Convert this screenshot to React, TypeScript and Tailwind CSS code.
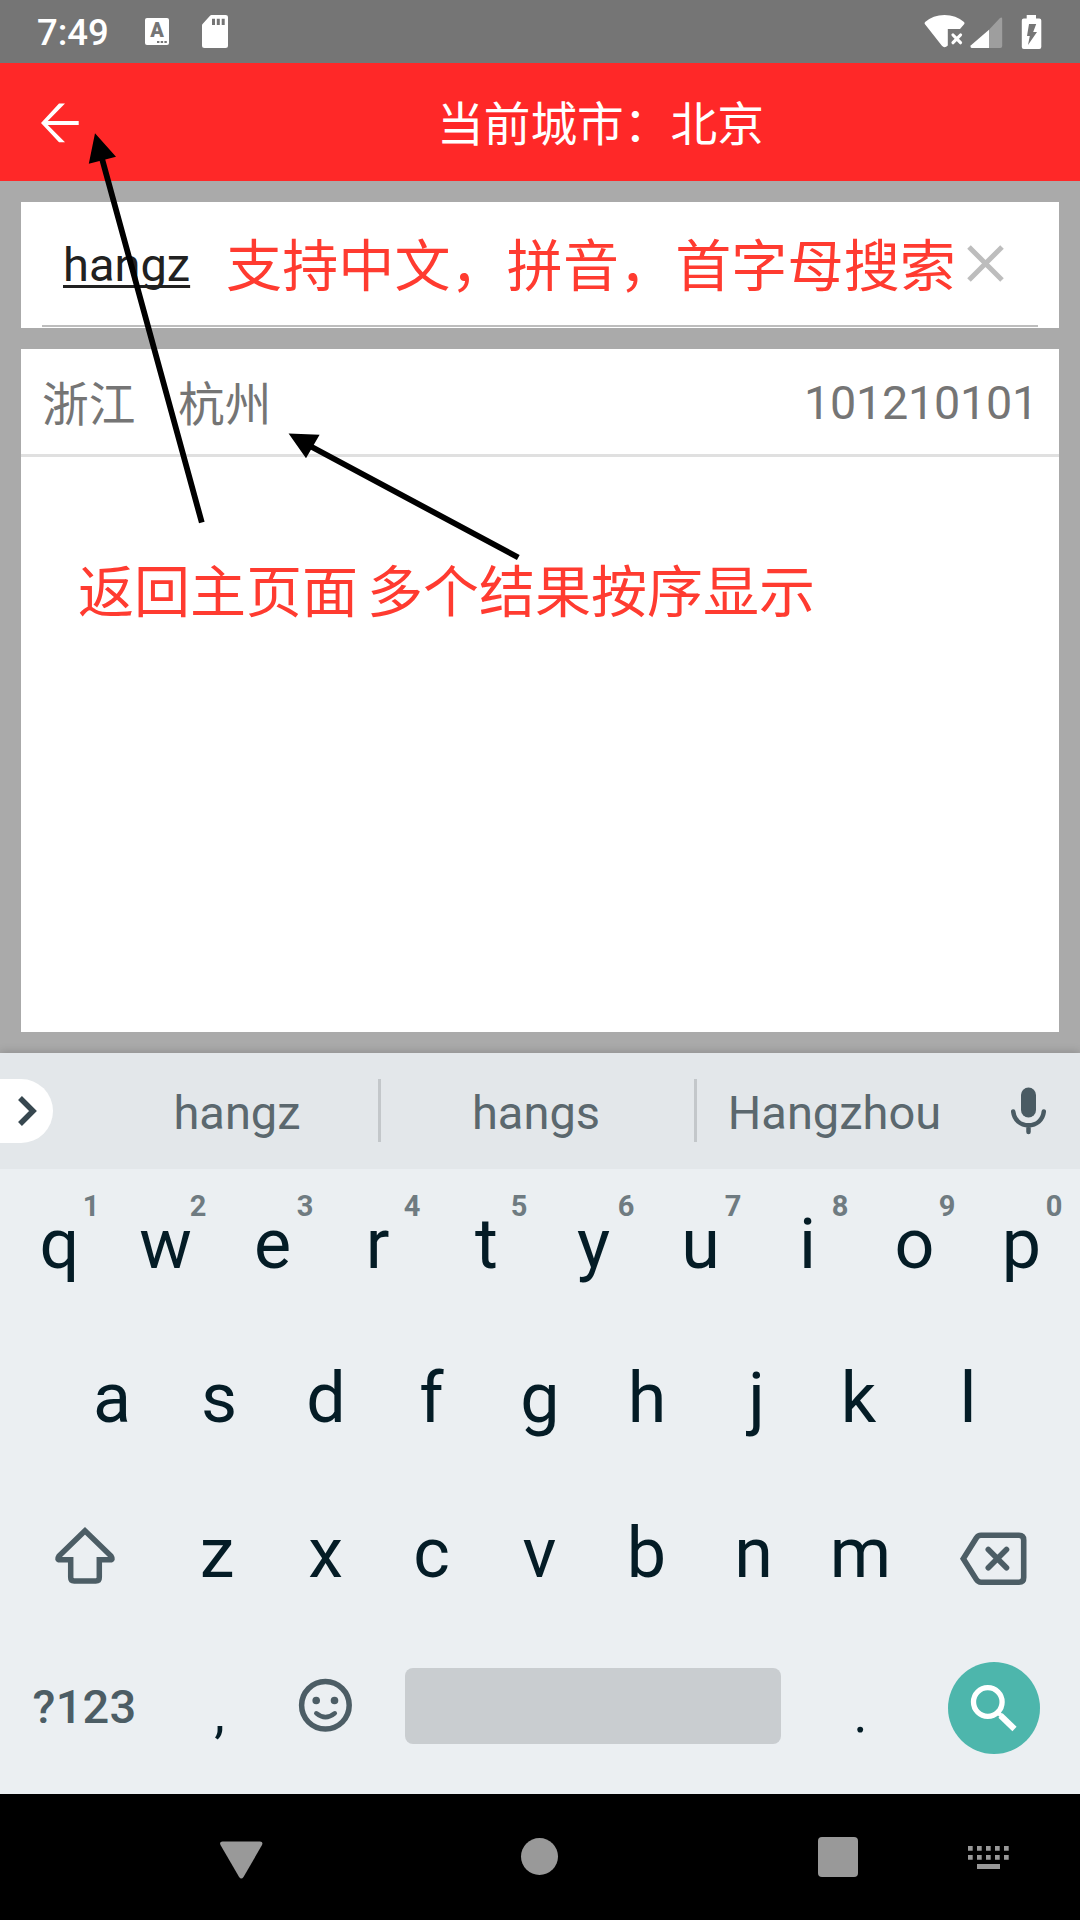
const sans = "font-['Roboto','Noto_Sans_CJK_SC',sans-serif]";
const cjk = "font-['Noto_Sans_CJK_SC',sans-serif]";

function StatusBar() {
  return (
    <div className="flex h-[63px] items-center bg-[#757575] text-white">
      <span className="ml-[37px] w-[108px] pt-[3px] text-[36.500px] leading-[42px] font-medium">7:49</span>
      <div className="relative flex h-[27px] w-6 justify-center rounded-[2px] bg-white">
        <span className="text-[20px] leading-[25px] font-black text-[#757575]">A</span>
        <svg className="absolute right-[2px] bottom-[2px]" width="10" height="2" fill="#757575">
          <path d="M0 0h2.4v2H0zM3.7 0h2.4v2H3.7zM7.4 0h2.4v2H7.4z" />
        </svg>
      </div>
      <svg className="ml-[33px]" width="26" height="33" viewBox="202 15 26 33" fill="white">
        <path
          fillRule="evenodd"
          d="M211.500 15H225.500a2.500 2.500 0 0 1 2.500 2.500V45.500a2.500 2.500 0 0 1-2.500 2.500H204.500a2.500 2.500 0 0 1-2.500-2.500V25.500q0-1 .8-1.800l7-7.700q.9-1 1.700-1ZM212 18.700V25h3v-6.300ZM216.800 18.700V25h3v-6.300ZM221.700 18.700V25h3v-6.300Z"
        />
      </svg>
      <svg className="mr-[38px] ml-auto" width="118" height="36" viewBox="924 13 118 36" fill="white">
        <path d="M924.800 23q-.6-1 .3-1.900Q933 14 944.500 14T964 21.100q.9.900.3 1.900L960 28H947.800V44.500Q944.500 48 941.700 44.500Z" />
        <path d="M953 34l7.500 7.700M960.500 34l-7.500 7.700" stroke="white" strokeWidth="3.200" strokeLinecap="round" />
        <path d="M989 28.800V47H972q-2.500-.6-1-2.800Z" />
        <path d="M989 28.800L1000 17q2-1.500 2.200.8V45q0 2-2 2H989Z" opacity=".3" />
        <path
          fillRule="evenodd"
          d="M1026.700 14h9.300v3.500h3.300q2 0 2 2V46q0 2-2 2h-15.500q-2 0-2-2V19.500q0-2 2-2h2.900ZM1029 23l-2 12h2.800l-1.800 9 9-13h-3.800l3-8Z"
        />
      </svg>
    </div>
  );
}

function Header() {
  return (
    <header className="flex h-[118px] items-center bg-[#ff2828] text-white">
      <svg className="mt-[2px] ml-[41px]" width="38" height="40" viewBox="41 103 38 40" fill="white">
        <path d="M59 103.500h6L47.800 120.900H78.700v4H47.800L65 142.300h-6L41 123Z" />
      </svg>
      <h1 className={`${cjk} mb-[2px] ml-[358px] text-[46.700px] leading-[60px]`}>当前城市：北京</h1>
    </header>
  );
}

function SearchBox() {
  return (
    <div className="flex h-[126px] flex-col bg-white px-[21px]">
      <div className="flex h-[125px] items-center border-b-2 border-[#bdbdbd]">
        <span className="mt-[2px] ml-[21px] text-[47px] leading-[60px] text-[#212121] underline decoration-[2.5px] underline-offset-[4px] [text-decoration-skip-ink:none]">
          hangz
        </span>
        <svg className="mr-[34px] ml-auto" width="37" height="37" viewBox="0 0 37 37" stroke="#bdbdbd" strokeWidth="5">
          <path d="M2 2l33 33M35 2L2 35" />
        </svg>
      </div>
    </div>
  );
}

function Results() {
  return (
    <div className="h-[683px] bg-white">
      <div className="flex h-[108px] items-center border-b-[3px] border-[#e0e0e0] px-[21px] text-[46.700px] leading-[60px] text-[#757575]">
        <span className={`${cjk} mb-[2px] w-[136px]`}>浙江</span>
        <span className={`${cjk} mb-[2px]`}>杭州</span>
        <span className="mt-[3px] ml-auto tracking-[-0.240px]">101210101</span>
      </div>
    </div>
  );
}

function Annotations() {
  return (
    <div className={`${cjk} text-[56px] leading-[80px] whitespace-nowrap text-[#ff3b30]`}>
      <span className="absolute top-[222px] left-[226px] tracking-[0.150px]">支持中文，拼音，首字母搜索</span>
      <span className="absolute top-[548px] left-[78px]">返回主页面</span>
      <span className="absolute top-[548px] left-[367px]">多个结果按序显示</span>
      <svg className="absolute top-0 left-0" width="1080" height="640" stroke="black" strokeWidth="5.800">
        <path d="M201.800 522.500L101 155M518.300 557.500L310 446" />
        <path d="M95 133.300L88.800 163.700 116 156.700ZM288.600 433.600L319.600 434.700 306 458.300Z" fill="black" stroke="none" />
      </svg>
    </div>
  );
}

function Suggestions() {
  return (
    <div className="flex h-[116px] items-center bg-[#e3e7ea] text-[47px] leading-[60px] text-[#5b686e]">
      <div className="mr-[43px] flex h-16 w-[53px] items-center rounded-r-full bg-white">
        <svg className="ml-[17px]" width="21" height="32" fill="none" stroke="#37474f" strokeWidth="5.500">
          <path d="M3 3l13 13L3 29" />
        </svg>
      </div>
      <span className="w-[282px] pt-1 text-center">hangz</span>
      <i className="mb-[2px] h-[63px] w-[3px] bg-[#c3c7ca]" />
      <span className="w-[313px] pt-1 pr-[3px] text-center">hangs</span>
      <i className="mb-[2px] h-[63px] w-[3px] bg-[#c3c7ca]" />
      <span className="w-[277px] pt-1 pr-[2px] text-center">Hangzhou</span>
      <svg className="ml-[37px]" width="35" height="48" fill="#4a5b63">
        <rect x="10" y="0.500" width="15" height="30" rx="7.500" />
        <path d="M2.200 24.500C3 33 9.500 38.300 17.500 38.300S32 33 32.800 24.500M17.500 38.300V45" fill="none" stroke="#4a5b63" strokeWidth="4.500" strokeLinecap="round" />
      </svg>
    </div>
  );
}

// Optical centring for letters whose ink is off the middle of their advance.
const optical: Record<string, string> = {
  r: 'pr-1',
  f: 'pr-[3px]',
  k: 'pr-[5px]',
  j: 'pl-[5px]',
  z: 'pr-[3px]',
  c: 'pr-[2px]',
  q: 'pl-[2px]',
};

function Key({ label, hint }: { label: string; hint?: string }) {
  return (
    <div className={`relative w-[107px] text-center text-[70px] leading-[80px] text-[#041c26] ${optical[label] ?? ''}`}>
      {label}
      {hint && (
        <span className="absolute -top-[14px] right-[12px] w-[18px] text-[29px] leading-8 font-bold text-[#6f7b81]">{hint}</span>
      )}
    </div>
  );
}

function PunctuationKey({ label }: { label: string }) {
  return <div className="w-[107px] pt-[11px] text-center text-[53px] leading-[80px] text-[#041c26]">{label}</div>;
}

function Keyboard() {
  return (
    <div className="h-[741px] bg-[#ebeff2] shadow-[0_-2px_8px_rgba(0,0,0,0.15)]">
      <Suggestions />
      <div className="flex h-[150px] items-center justify-center">
        {[...'qwertyuiop'].map((k, i) => (
          <Key key={k} label={k} hint={String((i + 1) % 10)} />
        ))}
      </div>
      <div className="flex h-[157px] items-center justify-center">
        {[...'asdfghjkl'].map((k) => (
          <Key key={k} label={k} />
        ))}
      </div>
      <div className="flex h-[154px] items-center">
        <svg width="165" height="154" viewBox="0 1476 165 154" fill="none" stroke="#4c5d65" strokeWidth="5.500">
          <path d="M85 1530.800L59 1556q-2.500 3.800.8 3.800H70.700V1577.500q0 3.500 3.500 3.500H95.800q3.500 0 3.500-3.500V1559.800H110.200q3.300 0 .8-3.800Z" />
        </svg>
        {[...'zxcvbnm'].map((k) => (
          <Key key={k} label={k} />
        ))}
        <svg width="166" height="154" viewBox="914 1476 166 154" fill="none" stroke="#4c5d65" strokeWidth="5.600">
          <path d="M963.300 1558.700L976.300 1538q1.700-2.800 4.700-2.800H1019q4.700 0 4.700 4.700V1577.500q0 4.700-4.700 4.700H981q-3 0-4.700-2.800Z" />
          <path d="M988.300 1549.500L1006.500 1567.700M1006.500 1549.500L988.300 1567.700" strokeLinecap="round" />
        </svg>
      </div>
      <div className="flex h-[156px] items-center">
        <span className="mb-[3px] w-[166px] pl-[3px] text-center text-[47px] leading-[60px] font-medium tracking-[0.200px] text-[#4c5d65]">?123</span>
        <PunctuationKey label="," />
        <svg width="106" height="156" viewBox="273 1630 106 156" fill="none" stroke="#4c5d65" strokeWidth="5.500">
          <circle cx="325.400" cy="1705.300" r="23.800" />
          <path d="M316.300 1713.300Q325.400 1721 334.800 1713.300" strokeWidth="4.500" strokeLinecap="round" />
          <path d="M316.200 1700.500h.01M334.500 1700.500h.01" strokeWidth="7.600" strokeLinecap="round" />
        </svg>
        <div className="mx-[26px] mt-[-4px] h-[76px] w-[376px] rounded-lg bg-[#c9cdd0]" />
        <PunctuationKey label="." />
        <div className="ml-[34px] flex h-[92px] w-[92px] rounded-full bg-[#4db6ac]">
          <svg width="92" height="92" viewBox="948 1662 92 92" fill="none" stroke="white">
            <circle cx="987.800" cy="1702" r="14.300" strokeWidth="5.300" />
            <path d="M996 1710.500L1001 1715.500" strokeWidth="4" />
            <path d="M1000.500 1715.500L1014.500 1729" strokeWidth="6" />
          </svg>
        </div>
      </div>
    </div>
  );
}

function NavBar() {
  return (
    <div className="flex h-[126px] items-center bg-black">
      <svg className="mt-[5px] ml-[220px]" width="43" height="38" fill="#999">
        <path d="M2.500 0.500h37.500q3.500.3 2 3.500L23.500 36q-2.200 3-4.400 0L.500 4q-1.500-3.200 2-3.500Z" />
      </svg>
      <div className="mb-[1px] ml-[258px] h-[37px] w-[37px] rounded-full bg-[#999]" />
      <div className="ml-[260px] h-10 w-10 rounded bg-[#999]" />
      <svg className="mt-[1px] ml-[110px]" width="41" height="23" fill="#999">
        {[0, 9, 18, 27, 36].map((x) => (
          <path key={x} d={`M${x} 0h4.700v4.800h-4.700zM${x} 9h4.700v4.800h-4.700z`} />
        ))}
        <path d="M9 18h23v5H9z" />
      </svg>
    </div>
  );
}

export default function App() {
  return (
    <div className={`${sans} relative h-[1920px] w-[1080px] overflow-hidden bg-[#aaa]`}>
      <StatusBar />
      <Header />
      <main className="flex flex-col gap-[21px] p-[21px]">
        <SearchBox />
        <Results />
      </main>
      <Keyboard />
      <NavBar />
      <Annotations />
    </div>
  );
}
